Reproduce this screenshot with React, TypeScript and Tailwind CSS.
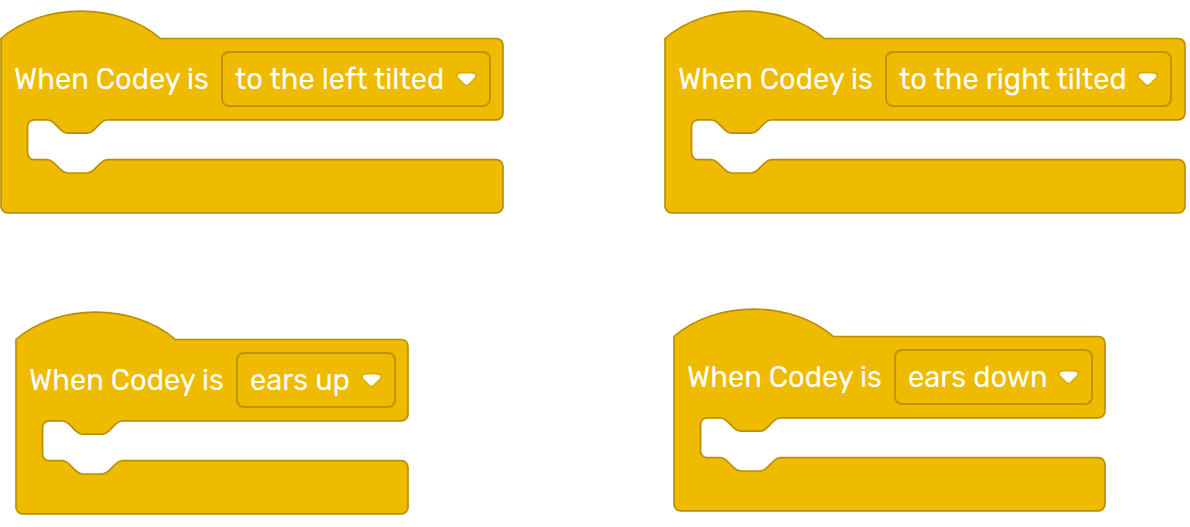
import { useId } from "react";

const UNIT = 1.66;

const OPTIONS = ["to the left tilted", "to the right tilted", "ears up", "ears down"];

type BlockProps = {
  value: string;
  /** Width of the block body in pixels. */
  width: number;
  selectClass: string;
  className?: string;
};

function blockPath(bodyWidth: number): string {
  const right = bodyWidth / UNIT;
  const corner = right - 4;
  const notch =
    "c -2 0 -3 1 -4 2 l -4 4 c -1 1 -2 2 -4 2 h -12 c -2 0 -3 -1 -4 -2 l -4 -4 c -1 -1 -2 -2 -4 -2";
  return [
    "M 0 0 c 25 -22 71 -22 96 0",
    `H ${corner} a 4 4 0 0 1 4 4 v 41 a 4 4 0 0 1 -4 4`,
    `H 64 ${notch} h -8 a 4 4 0 0 0 -4 4 v 16 a 4 4 0 0 0 4 4 h 8`,
    "c 2 0 3 1 4 2 l 4 4 c 1 1 2 2 4 2 h 12 c 2 0 3 -1 4 -2 l 4 -4 c 1 -1 2 -2 4 -2",
    `H ${corner} a 4 4 0 0 1 4 4 v 24 a 4 4 0 0 1 -4 4`,
    "H 4 a 4 4 0 0 1 -4 -4 Z",
  ].join(" ");
}

function DropdownArrow() {
  return (
    <svg
      aria-hidden="true"
      viewBox="0 0 12.71 8.79"
      className="pointer-events-none absolute top-1/2 right-[14px] h-[15px] w-[21px] -translate-y-1/2"
    >
      <path
        fill="#231f20"
        opacity="0.1"
        d="M12.71,2.44A2.41,2.41,0,0,1,12,4.16L8.08,8.08a2.45,2.45,0,0,1-3.45,0L0.72,4.16A2.42,2.42,0,0,1,0,2.44,2.48,2.48,0,0,1,.71.71C1,0.47,1.43,0,6.36,0S11.75,0.46,12,.71A2.44,2.44,0,0,1,12.71,2.44Z"
      />
      <path
        fill="#ffffff"
        d="M6.36,7.79a1.43,1.43,0,0,1-1-.42L1.42,3.45a1.44,1.44,0,0,1,0-2c0.56-.56,9.31-0.56,9.87,0a1.44,1.44,0,0,1,0,2L7.37,7.37A1.43,1.43,0,0,1,6.36,7.79Z"
      />
    </svg>
  );
}

function HatBlock({ value, width, selectClass, className = "" }: BlockProps) {
  const id = useId();
  return (
    <div className={`relative h-[204px] shrink-0 ${className}`} style={{ width: width + 2 }}>
      <svg aria-hidden="true" className="absolute inset-0 h-full w-full">
        <path
          d={blockPath(width)}
          transform={`translate(1 28.5) scale(${UNIT})`}
          fill="#eebb00"
          stroke="#b88f00"
          strokeWidth="1"
        />
      </svg>
      <div className="relative flex items-center pt-[41px] pl-[14px]">
        <label htmlFor={id} className="w-[207px] shrink-0 whitespace-nowrap">
          When Codey is
        </label>
        <div className="relative">
          <select
            id={id}
            defaultValue={value}
            className={`block h-14 cursor-pointer appearance-none rounded-lg border-2 border-[#be9500] bg-transparent pl-3 text-white outline-none ${selectClass}`}
          >
            {OPTIONS.map((option) => (
              <option key={option} className="text-black">
                {option}
              </option>
            ))}
          </select>
          <DropdownArrow />
        </div>
      </div>
    </div>
  );
}

export default function App() {
  return (
    <main className="grid min-h-screen grid-cols-[664fr_526fr] content-start gap-y-[94px] overflow-hidden bg-white pt-[10px] font-['Rubik','Roboto',sans-serif] text-[29px] leading-9 text-white">
      <HatBlock value="to the left tilted" width={502} selectClass="w-[270px]" />
      <HatBlock value="to the right tilted" width={520} selectClass="w-[287px]" />
      <HatBlock value="ears up" width={392} selectClass="w-[160px]" className="mt-[3px] ml-[15px]" />
      <HatBlock value="ears down" width={431} selectClass="w-[199px]" className="ml-[9px]" />
    </main>
  );
}
